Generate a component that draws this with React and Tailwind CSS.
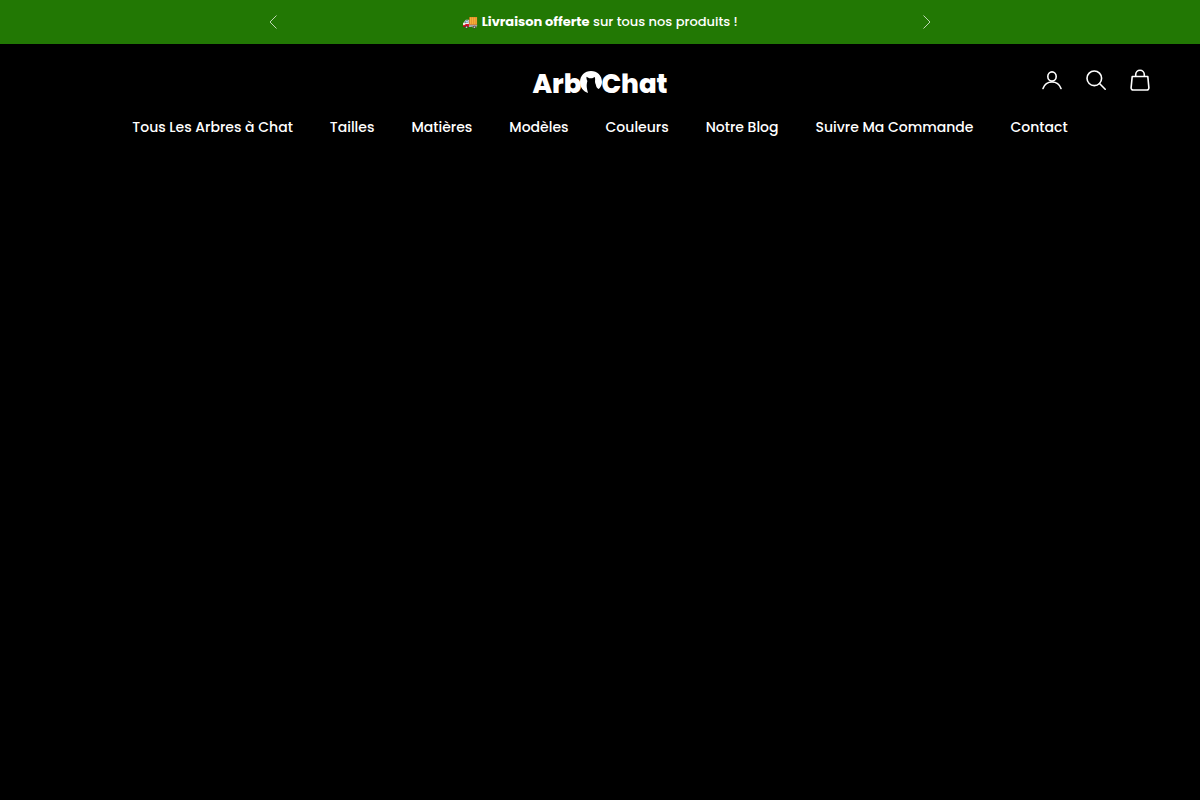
import React from 'react'

const links = [
  'Tous Les Arbres à Chat',
  'Tailles',
  'Matières',
  'Modèles',
  'Couleurs',
  'Notre Blog',
  'Suivre Ma Commande',
  'Contact',
]

const Chevron = ({ d }) => (
  <svg width="8" height="14" viewBox="0 0 8 14" fill="none" stroke="currentColor" strokeWidth="1" aria-hidden="true">
    <path d={d} />
  </svg>
)

const Icon = ({ children }) => (
  <svg
    width="24"
    height="24"
    viewBox="0 0 24 24"
    fill="none"
    stroke="currentColor"
    strokeWidth="1.6"
    strokeLinecap="round"
    strokeLinejoin="round"
    aria-hidden="true"
  >
    {children}
  </svg>
)

const AnnouncementBar = () => (
  <div className="bg-[#227804] h-11 flex items-center justify-center px-5">
    <div className="w-full max-w-[662px] flex items-center justify-between">
      <button type="button" aria-label="Précédent" className="cursor-pointer opacity-70">
        <Chevron d="M7.5 0.5 1 7l6.5 6.5" />
      </button>
      <p className="text-[13px] leading-5 font-medium">
        🚚 <strong className="font-bold">Livraison offerte</strong> sur tous nos produits !
      </p>
      <button type="button" aria-label="Suivant" className="cursor-pointer opacity-70">
        <Chevron d="M0.5 0.5 7 7l-6.5 6.5" />
      </button>
    </div>
  </div>
)

const Logo = () => (
  <a href="#" aria-label="ArboChat" className="flex items-baseline pt-1 text-[26px] leading-8 font-extrabold">
    <span>Arb</span>
    <svg width="22" height="22" viewBox="0 0 22 22" fill="currentColor" className="-mx-px" aria-hidden="true">
      <path d="M8 22C3.500 20.500 0 16.500 0 11 0 4.500 4.800 0 11 0s11 4.500 11 11c0 2.800-1.200 5.200-3.200 7-1.400-.6-2.400-1.600-2.600-3-.3-1.700-1.300-3-1.200-4.800.1-1.200.3-2.500-.2-4.200l-2.600 1.300H9.300L6.500 5.800c-.2 1.800.2 3 .9 4.200-.6 2-.9 4.300-.6 6.500.2 2 .7 3.800 1.200 5.500z" />
    </svg>
    <span>Chat</span>
  </a>
)

const Header = () => (
  <header className="px-12 pt-5">
    <div className="grid grid-cols-[1fr_auto_1fr] items-start">
      <div />
      <Logo />
      <div className="flex items-center justify-end gap-5 h-8">
        <a href="#" aria-label="Connexion">
          <Icon>
            <ellipse cx="12" cy="8.5" rx="4.2" ry="4.6" />
            <path d="M3 20.5c1.600-4.400 5-6.500 9-6.500s7.400 2.100 9 6.500" />
          </Icon>
        </a>
        <button type="button" aria-label="Recherche" className="cursor-pointer">
          <Icon>
            <circle cx="10.3" cy="10.3" r="7.3" />
            <path d="m15.500 15.500 5.700 5.700" />
          </Icon>
        </button>
        <a href="#" aria-label="Panier">
          <Icon>
            <path d="M4.200 8.500h15.600l1.100 11.400a2 2 0 0 1-2 2.100H5.100a2 2 0 0 1-2-2.100z" />
            <path d="M7.700 8.300V6.500a4.300 4.300 0 0 1 8.600 0v1.800" />
          </Icon>
        </a>
      </div>
    </div>
    <nav className="mt-4">
      <ul className="flex flex-wrap justify-center gap-x-[37px]">
        {links.map((label) => (
          <li key={label}>
            <a href="#" className="block text-sm leading-[22px] font-medium">
              {label}
            </a>
          </li>
        ))}
      </ul>
    </nav>
  </header>
)

const App = () => (
  <div className="min-h-screen bg-black text-white font-['Poppins','Inter',sans-serif]">
    <AnnouncementBar />
    <Header />
  </div>
)

export default App
